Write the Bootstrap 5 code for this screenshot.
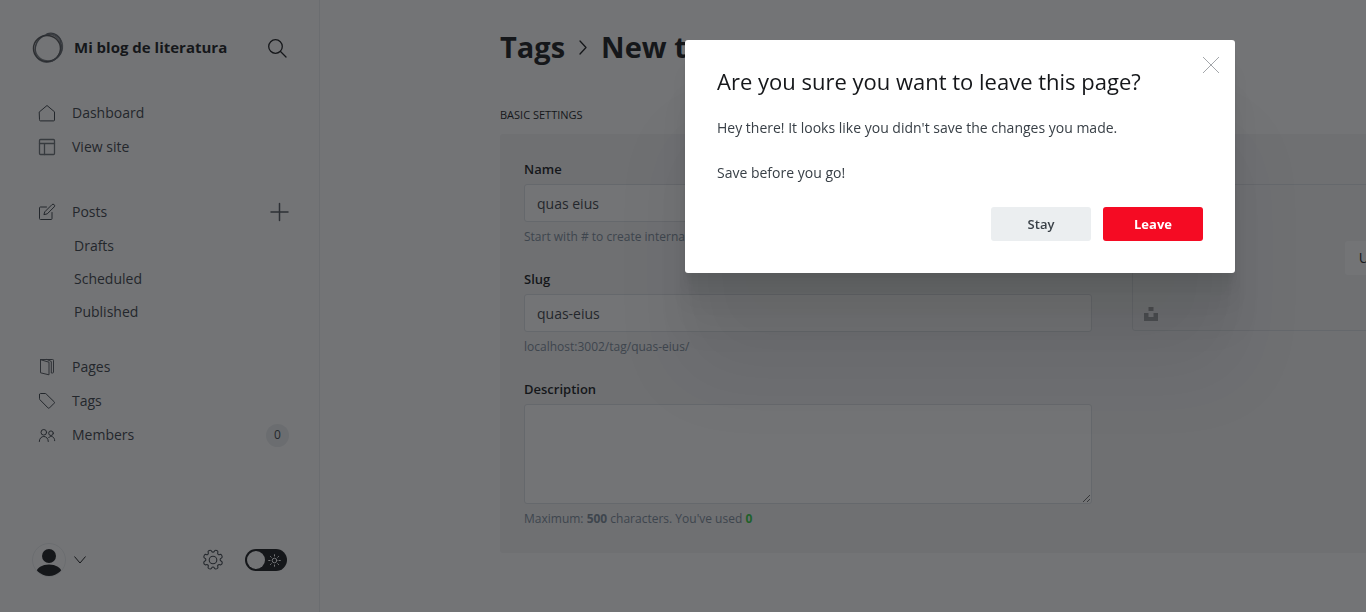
<!DOCTYPE html>
<html lang="en">
<head>
<meta charset="utf-8">
<meta name="viewport" content="width=device-width, initial-scale=1">
<title>Tags - New tag</title>
<link rel="stylesheet" href="https://cdn.jsdelivr.net/npm/bootstrap@5.3.0/dist/css/bootstrap.min.css">
<style>
  body { font-family: "Open Sans", "Noto Sans", sans-serif; font-size: 14px; line-height: 20px; color: #15171a; background: #fff; }
  svg { display: block; fill: none; stroke: currentColor; stroke-linecap: round; stroke-linejoin: round; }
  a { color: inherit; text-decoration: none; }
  .icon-btn { border: 0; padding: 0; background: none; color: inherit; }

  .side { width: 320px; border-right: 1px solid #ebeef0; padding: 32px 32px 35px 32px; }
  .site-name { margin-left: 10px; padding-bottom: 2px; font-size: 15px; font-weight: 700; }
  .menu-top { margin-top: 32px; }
  .menu-posts { margin-top: 31px; }
  .menu-rest { margin-top: 21px; }
  .menu-item { height: 34px; padding-left: 6px; color: #394047; }
  .menu-posts .menu-sub { height: 33px; }
  .menu-posts .menu-sub:last-child { height: 34px; }
  .menu-item svg { margin-right: 16px; }
  .menu-sub { padding-left: 42px; }
  .count { width: 23px; height: 23px; margin-right: -2px; border-radius: 50%; background: #ebeef0; font-size: 12px; }
  .new-post { margin-right: -2px; color: #50565c; }
  .avatar { width: 34px; height: 34px; border: 1px solid #ebeef0; border-radius: 50%; }

  .night { width: 42px; height: 22px; margin-left: 21px; }
  .night input { appearance: none; width: 42px; height: 22px; margin: 0; padding: 2px; border-radius: 11px; background: #15171a; display: block; }
  .night input::before { content: ""; display: block; width: 18px; height: 18px; border-radius: 50%; background: #fff; }
  .night svg { position: absolute; right: 6px; top: 5px; color: #fff; pointer-events: none; }

  .page-main { padding: 27px 0 56px 180px; }
  .page-title { gap: 14px; font-size: 29px; line-height: 40px; font-weight: 700; }
  .section-title { margin: 38px 0 9px; font-size: 11px; font-weight: 400; line-height: 20px; }
  .panel { width: max-content; padding: 24px; border-radius: 3px; background: #f4f5f6; column-gap: 40px; }
  .panel-col { width: 568px; }
  .field + .field { margin-top: 21px; }
  .field label, .field-label { display: block; height: 22px; margin-bottom: 4px; font-size: 13px; line-height: 23px; font-weight: 600; }
  .field .form-control { padding: 7px 12px 5px; border: 1px solid #dde1e5; border-radius: 3px; font-size: 14px; line-height: 24px; color: #394047; }
  .field textarea.form-control { height: 100px; }
  .hint { margin: 5px 0 0; font-size: 12px; line-height: 20px; color: #7c8b9a; }
  .hint-used { color: #30cf43; }
  .dropzone { position: relative; height: 147px; border: 1px solid #dde1e5; border-radius: 3px; }
  .dropzone .btn { width: 142px; height: 34px; padding: 0; border: 0; border-radius: 3px; background: #fff; font-size: 14px; }
  .dropzone svg { position: absolute; left: 11px; bottom: 9px; fill: #a0a2a5; stroke: none; }

  .shade { --bs-backdrop-bg: rgb(21, 23, 26); --bs-backdrop-opacity: .6; opacity: .6; }
  .modal-dialog.leave-dialog { width: 550px; max-width: 550px; margin: 40px 131px 0 auto; }
  .leave-dialog .modal-content { padding: 27px 32px 32px; border: 0; border-radius: 3px; color: #394047; font-size: 14px;
    box-shadow: 0 4px 2px rgba(0,0,0,.02), 0 9px 5px rgba(0,0,0,.02), 0 17px 10px rgba(0,0,0,.03),
      0 31px 18px rgba(0,0,0,.04), 0 58px 33px rgba(0,0,0,.04), 0 100px 80px rgba(0,0,0,.07); }
  .leave-dialog h2 { margin: 0 0 23px; font-size: 22px; line-height: 28px; font-weight: 500; color: #15171a; }
  .leave-dialog p { margin: 0 0 25px; }
  .leave-dialog .close-x { position: absolute; right: 16px; top: 17px; color: #a3a6aa; }
  .leave-dialog .actions { gap: 12px; margin-top: -1px; }
  .leave-dialog .actions .btn { width: 100px; height: 34px; padding: 2px 0 0; border: 0; border-radius: 3px; font-size: 13px; font-weight: 600; }
  .btn-stay { background: #ebeef0; color: #394047; }
  .leave-dialog .actions .btn-leave { background: #f50b23; color: #fff; font-weight: 700; }
</style>
</head>
<body class="overflow-hidden">
<div class="d-flex vh-100">
  <nav class="side d-flex flex-column flex-shrink-0" aria-label="Main">
    <div class="d-flex align-items-center">
      <svg width="32" height="32" viewBox="0 0 32 32" aria-hidden="true">
        <ellipse cx="15" cy="16.500" rx="13.500" ry="13" stroke="#15171a" stroke-width="1.500" opacity=".75"/>
        <ellipse cx="17" cy="15.500" rx="14" ry="13" stroke="#394047" stroke-width="1.200" opacity=".65" transform="rotate(-40 17 15.500)"/>
        <ellipse cx="16" cy="16.500" rx="12.500" ry="14.200" stroke="#50565c" stroke-width="1.300" opacity=".7" transform="rotate(30 16 16.500)"/>
        <path d="M15 2c7-3 14 3 14 9M29 12c3 7-2 14-9 17" stroke="#60656c" stroke-width="1.400"/>
      </svg>
      <span class="site-name">Mi blog de literatura</span>
      <button class="icon-btn ms-auto" type="button" aria-label="Search">
        <svg width="19" height="19" viewBox="0 0 19 19" stroke-width="1.300" aria-hidden="true"><circle cx="7.500" cy="7.500" r="6.800"/><path d="M12.500 12.500l5.500 5.500"/></svg>
      </button>
    </div>

    <div class="menu-top">
      <a href="#" class="menu-item d-flex align-items-center">
        <svg width="18" height="18" viewBox="0 0 18 18" aria-hidden="true"><path d="M1.500 7.800L9 1.500l7.500 6.300v8.200a.9.9 0 0 1-.9.900H2.400a.9.9 0 0 1-.9-.9z"/></svg>Dashboard</a>
      <a href="#" class="menu-item d-flex align-items-center">
        <svg width="18" height="18" viewBox="0 0 18 18" color="#6a7077" stroke-width="1.300" aria-hidden="true"><rect x="1.500" y="1.500" width="15" height="15" rx="1"/><path d="M1.500 5.500h15M6.500 5.500v11"/></svg>View site</a>
    </div>
    <div class="menu-posts">
      <div class="d-flex align-items-center">
        <a href="#" class="menu-item d-flex align-items-center flex-grow-1">
          <svg width="18" height="18" viewBox="0 0 18 18" aria-hidden="true"><path d="M8.500 4H2.400a.9.900 0 0 0-.9.900v10.700a.9.900 0 0 0 .9.900h10.700a.9.900 0 0 0 .9-.9V9.500M7 8.600l6.900-6.900a1.500 1.500 0 0 1 2.300 2.200L9.300 10.800l-3 .8z"/></svg>Posts</a>
        <button class="icon-btn new-post" type="button" aria-label="New post">
          <svg width="20" height="20" viewBox="0 0 20 20" stroke-width="1.500" aria-hidden="true"><path d="M10.500 1.500v17M2 10h17"/></svg>
        </button>
      </div>
      <a href="#" class="menu-item menu-sub d-flex align-items-center">Drafts</a>
      <a href="#" class="menu-item menu-sub d-flex align-items-center">Scheduled</a>
      <a href="#" class="menu-item menu-sub d-flex align-items-center">Published</a>
    </div>
    <div class="menu-rest">
      <a href="#" class="menu-item d-flex align-items-center">
        <svg width="18" height="18" viewBox="0 0 18 18" color="#50565c" aria-hidden="true"><path d="M2.500 2.200v12.600l8.500 2V4.200L2.500 1.700zM2.500 1.500h12.200a.8.800 0 0 1 .8.800v12a.8.800 0 0 1-.8.700H13.300V3.500L9 1.500"/></svg>Pages</a>
      <a href="#" class="menu-item d-flex align-items-center">
        <svg width="18" height="18" viewBox="0 0 18 18" aria-hidden="true"><path d="M1.500 2.500v4.200c0 .5.200.8.500 1.100l8 8.100c.5.500 1 .5 1.500 0l4.700-4.700c.4-.4.400-.9 0-1.400L8.200 2c-.4-.4-.7-.5-1.200-.5H2.500c-.6 0-1 .4-1 1z"/></svg>Tags</a>
      <a href="#" class="menu-item d-flex align-items-center">
        <svg width="18" height="18" viewBox="0 0 18 18" aria-hidden="true"><circle cx="5.800" cy="6.300" r="2.800"/><circle cx="13" cy="7.200" r="2.300"/><path d="M1.300 15.500c0-6.800 9-6.800 9 0M10.600 11.700c2-2.700 6.100-1.300 6.100 3"/></svg>Members
        <span class="count d-flex align-items-center justify-content-center ms-auto">0</span></a>
    </div>

    <div class="d-flex align-items-center mt-auto">
      <button class="icon-btn d-flex align-items-center" type="button" aria-label="Account menu">
        <span class="avatar overflow-hidden"><svg width="32" height="32" viewBox="0 0 32 32" aria-hidden="true"><g fill="#15171a" stroke="none"><circle cx="16" cy="12" r="7"/><ellipse cx="16" cy="28" rx="12.500" ry="7.500"/></g></svg></span>
        <svg class="ms-2" width="12" height="8" viewBox="0 0 12 8" aria-hidden="true"><path d="M.7.800L6 7l5.300-6.200"/></svg>
      </button>
      <a href="#" class="ms-auto" aria-label="Settings">
        <svg width="22" height="22" viewBox="0 0 22 22" color="#394047" stroke-width="1.100" aria-hidden="true"><circle cx="11" cy="11" r="3.800"/><path d="M9.700 2.300a1.400 1.400 0 0 0 2.600 0c.4-1.500 2.200-1.200 3.200-.4.600.5.500 1 .3 1.700a1.500 1.500 0 0 0 2 2c.7-.3 1.300-.3 1.700.4.900 1.300 1 2.700-.4 3.300a1.500 1.500 0 0 0 0 2.800c1.400.6 1.400 2 .5 3.200-.5.700-1.100.7-1.800.4a1.500 1.500 0 0 0-2 2c.3.700.3 1.200-.3 1.700-1.300.8-2.800.9-3.200-.5a1.400 1.400 0 0 0-2.600 0c-.4 1.400-1.900 1.300-3.200.5-.6-.5-.6-1-.3-1.700a1.500 1.500 0 0 0-2-2c-.7.300-1.300.3-1.800-.4-.9-1.200-.9-2.600.5-3.200a1.500 1.500 0 0 0 0-2.800C1.500 8.700 1.600 7.300 2.500 6c.4-.7 1-.7 1.700-.4a1.500 1.500 0 0 0 2-2c-.3-.7-.2-1.200.3-1.700 1-.8 2.800-1.100 3.200.4z"/></svg>
      </a>
      <label class="night position-relative">
        <input type="checkbox" role="switch" aria-label="Night shift">
        <svg width="13" height="13" viewBox="0 0 13 13" aria-hidden="true"><circle cx="6.500" cy="6.500" r="2.300"/><path d="M6.500.7v1.300M6.500 11v1.300M.7 6.500H2M11 6.500h1.300M2.400 2.400l.9.900M9.700 9.700l.9.900M2.400 10.600l.9-.9M9.700 3.300l.9-.9"/></svg>
      </label>
    </div>
  </nav>

  <main class="page-main flex-grow-1 overflow-hidden">
    <h1 class="page-title d-flex align-items-center m-0">
      <a href="#">Tags</a>
      <svg width="8" height="15" viewBox="0 0 8 15" stroke-width="1.300" aria-hidden="true"><path d="M1 1l6 6.500L1 14"/></svg>
      <span>New tag</span>
    </h1>
    <h2 class="section-title text-uppercase">Basic settings</h2>
    <form class="panel d-flex">
      <div class="panel-col">
        <div class="field">
          <label for="tag-name">Name</label>
          <input class="form-control" id="tag-name" type="text" value="quas eius">
          <p class="hint">Start with # to create internal tags</p>
        </div>
        <div class="field">
          <label for="tag-slug">Slug</label>
          <input class="form-control" id="tag-slug" type="text" value="quas-eius">
          <p class="hint">localhost:3002/tag/quas-eius/</p>
        </div>
        <div class="field">
          <label for="tag-description">Description</label>
          <textarea class="form-control" id="tag-description"></textarea>
          <p class="hint">Maximum: <b>500</b> characters. You've used <b class="hint-used">0</b></p>
        </div>
      </div>
      <div class="panel-col">
        <span class="field-label">Tag image</span>
        <div class="dropzone d-flex align-items-center justify-content-center">
          <button class="btn" type="button">Upload tag image</button>
          <svg width="14" height="14" viewBox="0 0 14 14" aria-hidden="true"><path d="M4.500 0h5v4h-5zM0 6h4.500v4h5V6H14v8H0z"/></svg>
        </div>
      </div>
    </form>
  </main>
</div>

<div class="modal-backdrop shade"></div>
<div class="modal d-block" role="dialog" aria-modal="true" aria-labelledby="leave-title">
  <div class="modal-dialog leave-dialog">
    <div class="modal-content">
      <h2 id="leave-title">Are you sure you want to leave this page?</h2>
      <button class="icon-btn close-x" type="button" aria-label="Close">
        <svg width="16" height="16" viewBox="0 0 16 16" aria-hidden="true"><path d="M0 0l16 16M16 0L0 16"/></svg>
      </button>
      <p>Hey there! It looks like you didn't save the changes you made.</p>
      <p>Save before you go!</p>
      <div class="actions d-flex justify-content-end">
        <button class="btn btn-stay" type="button">Stay</button>
        <button class="btn btn-leave" type="button">Leave</button>
      </div>
    </div>
  </div>
</div>
<script src="https://cdn.jsdelivr.net/npm/bootstrap@5.3.0/dist/js/bootstrap.bundle.min.js"></script>
</body>
</html>
